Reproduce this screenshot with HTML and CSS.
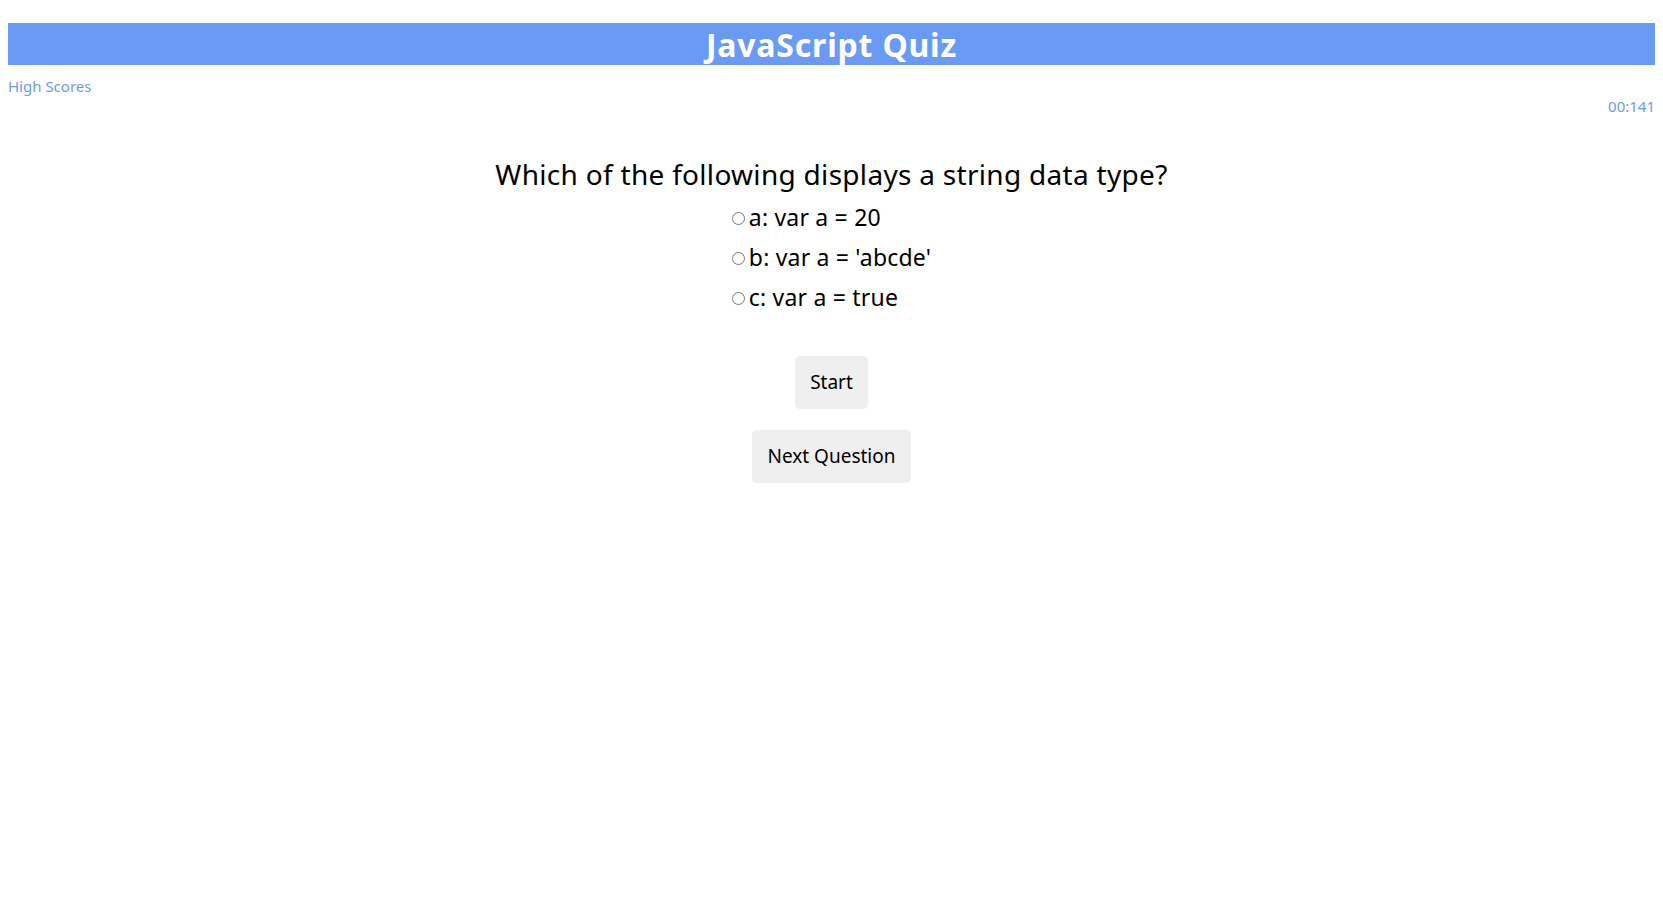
FILE: index.html
```html
<!DOCTYPE html>
<html lang="en">
<head>
<meta charset="utf-8">
<title>JavaScript Quiz</title>
<link rel="stylesheet" href="styles.css">
</head>
<body>
<h1 class="title">JavaScript Quiz</h1>
<a class="high-scores" href="#">High Scores</a>
<div class="timer">00:141</div>
<main class="quiz">
  <h2 class="question">Which of the following displays a string data type?</h2>
  <div class="options">
    <label class="option"><input type="radio" name="answer">a: var a = 20</label>
    <label class="option"><input type="radio" name="answer">b: var a = 'abcde'</label>
    <label class="option"><input type="radio" name="answer">c: var a = true</label>
  </div>
  <button class="btn btn-start">Start</button>
  <button class="btn btn-next">Next Question</button>
</main>
</body>
</html>
```
FILE: styles.css
```css
body {
  margin: 8px;
  font-family: "Noto Sans", "DejaVu Sans", sans-serif;
  color: #000;
  background: #fff;
}
.title {
  margin: 15px 0 0;
  height: 42px;
  line-height: 44px;
  background: #6a9bf4;
  color: #fff;
  font-size: 32px;
  font-weight: 700;
  text-align: center;
  letter-spacing: 0.8px;
}
.high-scores {
  display: block;
  width: max-content;
  margin-top: 11px;
  font-size: 15px;
  line-height: 20px;
  color: #6a9bf4;
  text-decoration: none;
}
.timer {
  text-align: right;
  font-size: 15px;
  line-height: 20px;
  color: #6a9bf4;
}
.quiz {
  display: flex;
  flex-direction: column;
  align-items: center;
}
.question {
  margin: 40px 0 5px;
  font-size: 28px;
  line-height: 36px;
  font-weight: 400;
  letter-spacing: 0.3px;
}
.options {
  display: flex;
  flex-direction: column;
  align-items: flex-start;
}
.option {
  display: flex;
  align-items: center;
  height: 40px;
  font-size: 23px;
  letter-spacing: 0.2px;
}
.option input {
  width: 13px;
  height: 13px;
  margin: 2px 4px 0 0;
}
.btn {
  font-family: inherit;
  font-size: 19px;
  line-height: 23px;
  padding: 15px 15px;
  border: none;
  border-radius: 5px;
  background: #efefef;
  color: #000;
}
.btn-start {
  margin-top: 39px;
}
.btn-next {
  margin-top: 21px;
}
```
